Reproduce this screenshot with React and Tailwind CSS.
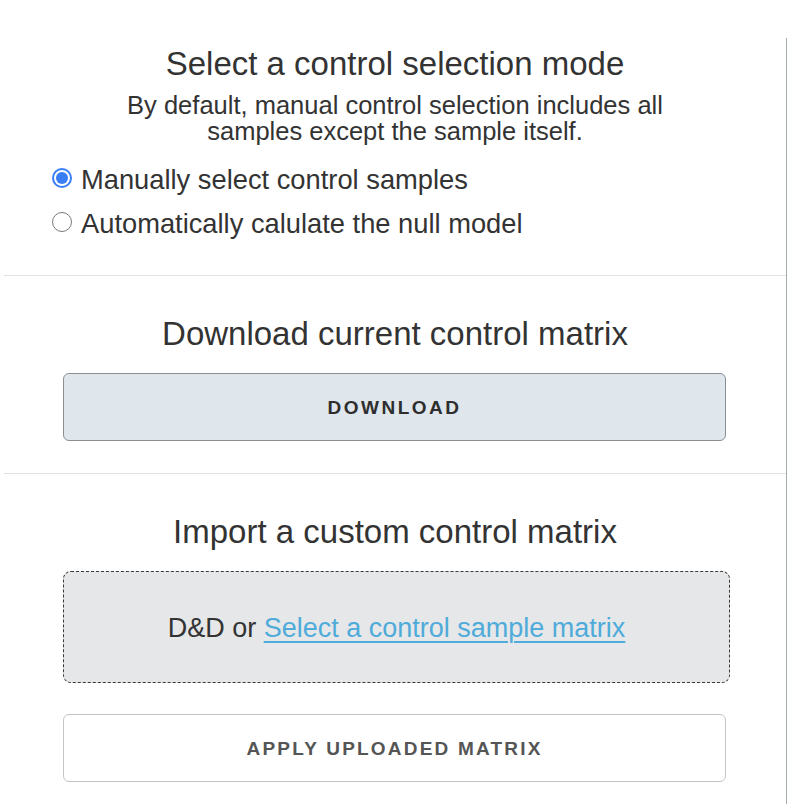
import React, { useState } from "react";

const FONT = "font-['Liberation_Sans',Arial,Helvetica,sans-serif]";

function Radio({ checked, label, onSelect }) {
  return (
    <label className="flex h-[44px] cursor-pointer items-center pl-[48px]" onClick={onSelect}>
      {checked ? (
        <span className="flex h-[20px] w-[20px] items-center justify-center rounded-full border-2 border-[#3a7ef6] bg-white">
          <span className="h-[12px] w-[12px] rounded-full bg-[#3a7ef6]" />
        </span>
      ) : (
        <span className="h-[20px] w-[20px] rounded-full border-[1.5px] border-[#7a7a7a] bg-white" />
      )}
      <span className="ml-[9px] pt-[3px] text-[27.3px] leading-[32px] text-[#333]">{label}</span>
    </label>
  );
}

export default function App() {
  const [mode, setMode] = useState("manual");

  return (
    <div className={`${FONT} min-h-[804px] bg-white`}>
      <div className="ml-[4px] mt-[38px] w-[783px] border-r border-[#a3abab] pb-[22px] text-[#333]">
        {/* selection mode */}
        <section className="pb-[31px] pt-[7px]">
          <h2 className="text-center text-[33px] leading-[38px]">Select a control selection mode</h2>
          <p className="mx-auto mt-[9px] w-[600px] text-center text-[25.5px] leading-[26px]">
            By default, manual control selection includes all samples except the sample itself.
          </p>
          <div className="mt-[12px]">
            <Radio
              checked={mode === "manual"}
              label="Manually select control samples"
              onSelect={() => setMode("manual")}
            />
            <Radio
              checked={mode === "auto"}
              label="Automatically calulate the null model"
              onSelect={() => setMode("auto")}
            />
          </div>
        </section>

        {/* download */}
        <section className="border-t border-[#e2e2e2] pb-[32px] pt-[38px]">
          <h2 className="pt-[1px] text-center text-[33px] leading-[38px]">Download current control matrix</h2>
          <button className="ml-[59px] mt-[20px] flex h-[68px] w-[663px] items-center justify-center rounded-[6px] border border-[#8a8f94] bg-[#dfe6ec] pt-[3px] text-[19px] font-bold tracking-[2.5px] text-[#2e2e2e]">
            DOWNLOAD
          </button>
        </section>

        {/* import */}
        <section className="border-t border-[#e2e2e2] pt-[38px]">
          <h2 className="pt-[1px] text-center text-[33px] leading-[38px]">Import a custom control matrix</h2>
          <div className="ml-[59px] mt-[20px] flex h-[112px] w-[667px] items-center justify-center rounded-[8px] border border-dashed border-[#3a3a3a] bg-[#e6e7e9] pt-[2px] text-[27px]">
            <span>
              D&amp;D or{" "}
              <a href="#" className="text-[#4fabd9] underline decoration-[2px] underline-offset-[4px]">
                Select a control sample matrix
              </a>
            </span>
          </div>
          <button className="ml-[59px] mt-[31px] flex h-[68px] w-[663px] items-center justify-center rounded-[6px] border border-[#c4c4c4] bg-white pt-[3px] text-[19px] font-bold tracking-[2.2px] text-[#555]">
            APPLY UPLOADED MATRIX
          </button>
        </section>
      </div>
    </div>
  );
}
